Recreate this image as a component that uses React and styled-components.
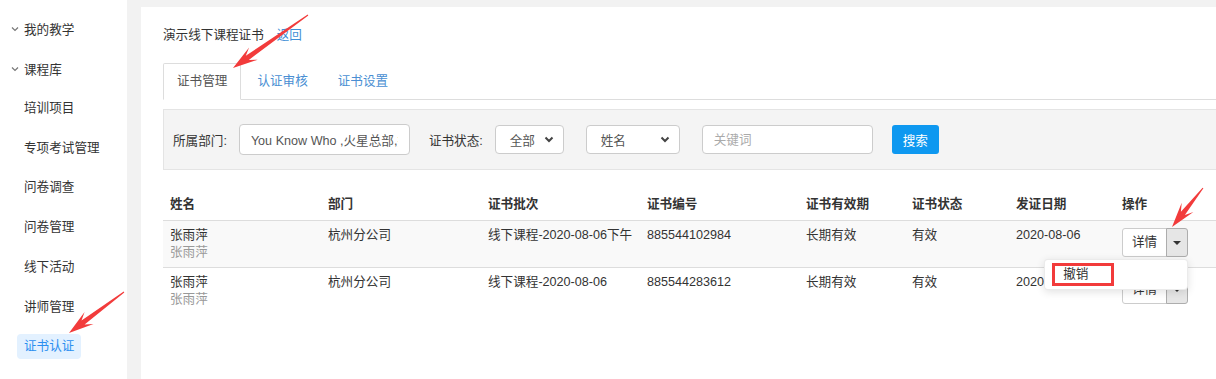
import React from 'react';
import styled, { createGlobalStyle } from 'styled-components';

const GlobalStyle = createGlobalStyle`
  html, body { margin: 0; padding: 0; background: #f2f2f2; overflow: hidden; }
  body {
    font-family: "Liberation Sans", "Noto Sans CJK SC", sans-serif;
    font-size: 12.6px;
    color: #333;
  }
  * { box-sizing: border-box; }
`;

const Page = styled.div`
  position: relative;
  display: flex;
  height: 379px;
  width: 1216px;
  overflow: hidden;
`;

/* ---------- Sidebar ---------- */
const Sidebar = styled.nav`
  width: 127px;
  flex: none;
  background: #fff;
  padding-top: 9px;
  display: flex;
  flex-direction: column;
`;

const NavItem = styled.div`
  height: 39.75px;
  display: flex;
  align-items: center;
  padding-left: ${p => (p.$group ? '11px' : '17px')};
  white-space: nowrap;
`;

const NavLabel = styled.span`
  display: inline-block;
  height: 25px;
  line-height: 25px;
  padding: 0 7px;
  border-radius: 4px;
  color: ${p => (p.$active ? '#2b8ff0' : '#333')};
  background: ${p => (p.$active ? '#e3f1ff' : 'transparent')};
`;

const GroupLabel = styled.span`
  margin-left: 5px;
  color: #333;
`;

const Chevron = () => (
  <svg width="8" height="6" viewBox="0 0 8 6">
    <polyline points="1,1.5 4,4.5 7,1.5" fill="none" stroke="#777" strokeWidth="1.2" />
  </svg>
);

/* ---------- Main ---------- */
const Main = styled.main`
  flex: 1;
  min-width: 0;
  margin: 7px 0 0 14px;
  background: #fff;
  padding: 19px 0 0 22px;
`;

const TitleRow = styled.div`
  display: flex;
  gap: 13px;
  line-height: 18px;
`;

const Link = styled.a`
  color: #3f8fd6;
  text-decoration: none;
`;

const TabBar = styled.div`
  margin-top: 19px;
  display: flex;
  border-bottom: 1px solid #ddd;
  height: 37px;
`;

const Tab = styled.div`
  height: 37px;
  margin-bottom: -1px;
  margin-right: 2px;
  padding: 0 13px;
  line-height: 35px;
  border: 1px solid ${p => (p.$active ? '#ddd' : 'transparent')};
  border-bottom-color: transparent;
  border-radius: 2px 2px 0 0;
  background: ${p => (p.$active ? '#fff' : 'transparent')};
  color: ${p => (p.$active ? '#555' : '#4a8fd3')};
`;

const FilterBar = styled.div`
  margin-top: 9px;
  height: 61px;
  background: #f4f4f4;
  border: 1px solid #e4e4e4;
  border-right: none;
  display: flex;
  align-items: center;
  padding-left: 9px;
`;

const FieldLabel = styled.label`
  color: #333;
  margin-left: ${p => p.$gap || 0}px;
  margin-right: 12px;
  white-space: nowrap;
`;

const TextInput = styled.input`
  width: 171px;
  height: ${p => p.$h || 29}px;
  margin-left: ${p => p.$gap || 0}px;
  border: 1px solid #ccc;
  border-radius: 4px;
  background: #fff;
  padding: 0 11px;
  font: inherit;
  color: #555;
  outline: none;
  &::placeholder { color: #aaa; }
`;

const SelectBox = styled.div`
  width: ${p => p.$w}px;
  height: 29px;
  margin-left: ${p => p.$gap || 0}px;
  border: 1px solid #ccc;
  border-radius: 4px;
  background: #fff;
  display: flex;
  align-items: center;
  justify-content: space-between;
  padding: 0 9px 0 14px;
  color: #555;
`;

const SelectArrow = () => (
  <svg width="10" height="7" viewBox="0 0 10 7">
    <polyline points="1.5,1.5 5,5 8.5,1.5" fill="none" stroke="#444" strokeWidth="2" />
  </svg>
);

const PrimaryButton = styled.button`
  margin-left: 19px;
  width: 47px;
  height: 29px;
  border: none;
  border-radius: 3px;
  background: #0e98f0;
  color: #fff;
  font: inherit;
  padding: 0;
`;

/* ---------- Table ---------- */
const Table = styled.table`
  margin-top: 15px;
  width: 100%;
  table-layout: fixed;
  border-collapse: collapse;
`;

const Th = styled.th`
  text-align: left;
  font-weight: bold;
  color: #333;
  padding: 11px 7px 7px;
  line-height: 17px;
  border-bottom: 1px solid #ddd;
  white-space: nowrap;
`;

const Tr = styled.tr`
  background: ${p => (p.$striped ? '#f9f9f9' : 'transparent')};
`;

const Td = styled.td`
  vertical-align: top;
  padding: 6px 7px 6px;
  line-height: 17px;
  border-top: 1px solid #ddd;
  white-space: nowrap;
`;

const Sub = styled.div`
  color: #999;
`;

const BtnGroup = styled.div`
  position: relative;
  display: inline-flex;
  margin-top: 1px;
`;

const Btn = styled.button`
  height: 29px;
  padding: 0 ${p => (p.$toggle ? '0' : '9px')};
  width: ${p => (p.$toggle ? '22px' : 'auto')};
  margin-left: ${p => (p.$toggle ? '-1px' : '0')};
  border: 1px solid ${p => (p.$toggle ? '#adadad' : '#ccc')};
  border-radius: ${p => (p.$toggle ? '0 3px 3px 0' : '3px 0 0 3px')};
  background: ${p => (p.$toggle ? '#e6e6e6' : '#fff')};
  color: #333;
  font: inherit;
  display: flex;
  align-items: center;
  justify-content: center;
`;

const Caret = styled.span`
  width: 0;
  height: 0;
  border-left: 4px solid transparent;
  border-right: 4px solid transparent;
  border-top: 4px solid #333;
`;

const Menu = styled.div`
  position: absolute;
  right: 0;
  top: calc(100% + 2px);
  width: 144px;
  z-index: 10;
  background: #fff;
  border: 1px solid rgba(0, 0, 0, 0.08);
  border-radius: 4px;
  box-shadow: 0 2px 8px rgba(0, 0, 0, 0.12);
  padding: 4px 0;
`;

const MenuItem = styled.div`
  position: relative;
  padding: 0 18px;
  line-height: 21px;
  color: #333;
`;

const Mark = styled.span`
  position: absolute;
  left: 7px;
  top: -1px;
  width: 62px;
  height: 23px;
  border: 3px solid #f23b3b;
`;

/* ---------- Annotation arrows ---------- */
const Overlay = styled.svg`
  position: absolute;
  left: 0;
  top: 0;
  pointer-events: none;
  z-index: 20;
`;

function arrowPoints([x1, y1], [x2, y2]) {
  const dx = x2 - x1, dy = y2 - y1;
  const L = Math.hypot(dx, dy);
  const ux = dx / L, uy = dy / L;
  const nx = -uy, ny = ux;
  const H = 25, W = 7.5, neckW = 2.6, tailW = 0.5;
  const bx = x2 - ux * H, by = y2 - uy * H;
  const kx = x2 - ux * H * 0.7, ky = y2 - uy * H * 0.7;
  const pts = [
    [x1 + nx * tailW, y1 + ny * tailW],
    [kx + nx * neckW, ky + ny * neckW],
    [bx + nx * W, by + ny * W],
    [x2, y2],
    [bx - nx * W, by - ny * W],
    [kx - nx * neckW, ky - ny * neckW],
    [x1 - nx * tailW, y1 - ny * tailW],
  ];
  return pts.map(p => p.map(v => v.toFixed(1)).join(',')).join(' ');
}

const arrows = [
  [[308, 15], [233, 68]],
  [[124, 292], [69, 333]],
  [[1203, 188], [1172, 227]],
];

const navItems = ['培训项目', '专项考试管理', '问卷调查', '问卷管理', '线下活动', '讲师管理'];

const rows = [
  { name: '张雨萍', dept: '杭州分公司', batch: '线下课程-2020-08-06下午', no: '885544102984', period: '长期有效', status: '有效', date: '2020-08-06', menu: true },
  { name: '张雨萍', dept: '杭州分公司', batch: '线下课程-2020-08-06', no: '885544283612', period: '长期有效', status: '有效', date: '2020' },
];

const cols = [158, 160, 159, 159, 106, 104, 106];
const heads = ['姓名', '部门', '证书批次', '证书编号', '证书有效期', '证书状态', '发证日期', '操作'];

export default function App() {
  return (
    <>
      <GlobalStyle />
      <Page>
        <Sidebar>
          <NavItem $group><Chevron /><GroupLabel>我的教学</GroupLabel></NavItem>
          <NavItem $group><Chevron /><GroupLabel>课程库</GroupLabel></NavItem>
          {navItems.map(t => (
            <NavItem key={t}><NavLabel>{t}</NavLabel></NavItem>
          ))}
          <NavItem><NavLabel $active>证书认证</NavLabel></NavItem>
        </Sidebar>

        <Main>
          <TitleRow>
            <span>演示线下课程证书</span>
            <Link href="#">返回</Link>
          </TitleRow>

          <TabBar>
            <Tab $active>证书管理</Tab>
            <Tab>认证审核</Tab>
            <Tab>证书设置</Tab>
          </TabBar>

          <FilterBar>
            <FieldLabel>所属部门:</FieldLabel>
            <TextInput $h={31} readOnly value="You Know Who ,火星总部,技术部" />
            <FieldLabel $gap={19}>证书状态:</FieldLabel>
            <SelectBox $w={69}><span>全部</span><SelectArrow /></SelectBox>
            <SelectBox $w={94} $gap={22}><span>姓名</span><SelectArrow /></SelectBox>
            <TextInput $gap={22} placeholder="关键词" />
            <PrimaryButton>搜索</PrimaryButton>
          </FilterBar>

          <Table>
            <colgroup>
              {cols.map((w, i) => <col key={i} style={{ width: w }} />)}
              <col />
            </colgroup>
            <thead>
              <tr>{heads.map(h => <Th key={h}>{h}</Th>)}</tr>
            </thead>
            <tbody>
              {rows.map((r, i) => (
                <Tr key={i} $striped={i === 0}>
                  <Td>{r.name}<Sub>{r.name}</Sub></Td>
                  <Td>{r.dept}</Td>
                  <Td>{r.batch}</Td>
                  <Td>{r.no}</Td>
                  <Td>{r.period}</Td>
                  <Td>{r.status}</Td>
                  <Td>{r.date}</Td>
                  <Td>
                    <BtnGroup>
                      <Btn>详情</Btn>
                      <Btn $toggle><Caret /></Btn>
                      {r.menu && (
                        <Menu>
                          <MenuItem><Mark />撤销</MenuItem>
                        </Menu>
                      )}
                    </BtnGroup>
                  </Td>
                </Tr>
              ))}
            </tbody>
          </Table>
        </Main>

        <Overlay width="1216" height="379" viewBox="0 0 1216 379">
          {arrows.map((a, i) => (
            <polygon key={i} points={arrowPoints(a[0], a[1])} fill="#f23b3b" />
          ))}
        </Overlay>
      </Page>
    </>
  );
}
